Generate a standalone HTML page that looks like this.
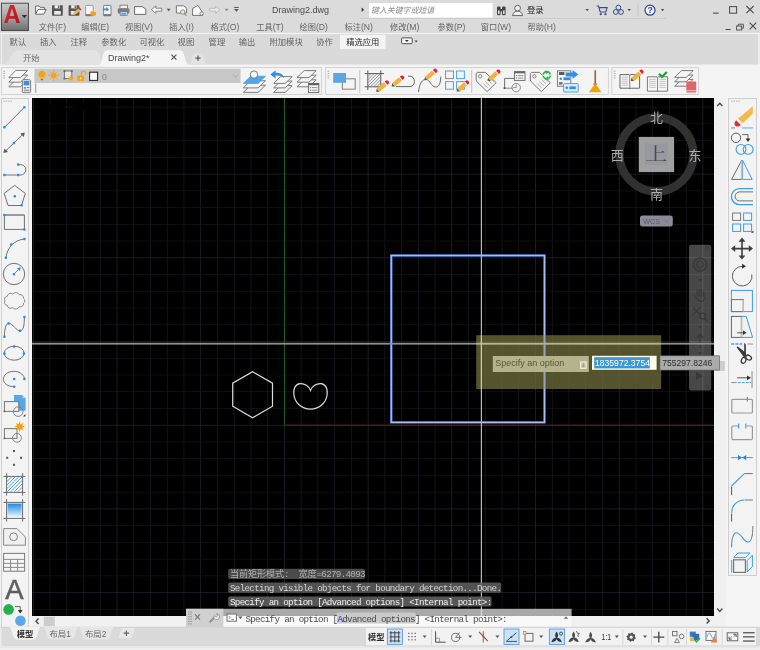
<!DOCTYPE html>
<html lang="zh-CN"><head><meta charset="utf-8"><title>Drawing2.dwg</title>
<style>
html,body{margin:0;padding:0;background:#f0f0f0;overflow:hidden}
body{width:760px;height:650px;position:relative}
svg{position:absolute;left:-10px;top:-10px;display:block;filter:blur(0.4px)}
text{font-family:"Liberation Sans", "Noto Sans CJK SC", sans-serif;white-space:pre}
text.m{font-family:"Liberation Mono", "Noto Sans CJK SC", monospace}
</style></head><body>
<svg width="780" height="670" viewBox="-10 -10 780 670">
<rect x="-10" y="-10" width="780" height="670" fill="#f4f4f4" />
<rect x="-10" y="-10" width="780" height="43.5" fill="#dbdbdb" />
<rect x="-10" y="33.5" width="780" height="31.5" fill="#dadada" />
<rect x="-10" y="32.9" width="780" height="1.2" fill="#f4f4f4" />
<rect x="-10" y="65" width="780" height="33" fill="#f4f4f4" />
<clipPath id="cv"><rect x="32" y="98" width="682" height="518"/></clipPath>
<rect x="32" y="98" width="682" height="518" fill="#000" />
<g clip-path="url(#cv)">
<rect x="32.95" y="98" width="0.7" height="518" fill="#262731" />
<rect x="49.69" y="98" width="0.7" height="518" fill="#1a1b23" />
<rect x="66.43" y="98" width="0.7" height="518" fill="#1a1b23" />
<rect x="83.17" y="98" width="0.7" height="518" fill="#1a1b23" />
<rect x="99.91" y="98" width="0.7" height="518" fill="#1a1b23" />
<rect x="116.65" y="98" width="0.7" height="518" fill="#262731" />
<rect x="133.39" y="98" width="0.7" height="518" fill="#1a1b23" />
<rect x="150.13" y="98" width="0.7" height="518" fill="#1a1b23" />
<rect x="166.87" y="98" width="0.7" height="518" fill="#1a1b23" />
<rect x="183.61" y="98" width="0.7" height="518" fill="#1a1b23" />
<rect x="200.35" y="98" width="0.7" height="518" fill="#262731" />
<rect x="217.09" y="98" width="0.7" height="518" fill="#1a1b23" />
<rect x="233.83" y="98" width="0.7" height="518" fill="#1a1b23" />
<rect x="250.57" y="98" width="0.7" height="518" fill="#1a1b23" />
<rect x="267.31" y="98" width="0.7" height="518" fill="#1a1b23" />
<rect x="284.05" y="98" width="0.7" height="518" fill="#262731" />
<rect x="300.79" y="98" width="0.7" height="518" fill="#1a1b23" />
<rect x="317.53" y="98" width="0.7" height="518" fill="#1a1b23" />
<rect x="334.27" y="98" width="0.7" height="518" fill="#1a1b23" />
<rect x="351.01" y="98" width="0.7" height="518" fill="#1a1b23" />
<rect x="367.75" y="98" width="0.7" height="518" fill="#262731" />
<rect x="384.49" y="98" width="0.7" height="518" fill="#1a1b23" />
<rect x="401.23" y="98" width="0.7" height="518" fill="#1a1b23" />
<rect x="417.97" y="98" width="0.7" height="518" fill="#1a1b23" />
<rect x="434.71" y="98" width="0.7" height="518" fill="#1a1b23" />
<rect x="451.45" y="98" width="0.7" height="518" fill="#262731" />
<rect x="468.19" y="98" width="0.7" height="518" fill="#1a1b23" />
<rect x="484.93" y="98" width="0.7" height="518" fill="#1a1b23" />
<rect x="501.67" y="98" width="0.7" height="518" fill="#1a1b23" />
<rect x="518.41" y="98" width="0.7" height="518" fill="#1a1b23" />
<rect x="535.15" y="98" width="0.7" height="518" fill="#262731" />
<rect x="551.89" y="98" width="0.7" height="518" fill="#1a1b23" />
<rect x="568.63" y="98" width="0.7" height="518" fill="#1a1b23" />
<rect x="585.37" y="98" width="0.7" height="518" fill="#1a1b23" />
<rect x="602.11" y="98" width="0.7" height="518" fill="#1a1b23" />
<rect x="618.85" y="98" width="0.7" height="518" fill="#262731" />
<rect x="635.59" y="98" width="0.7" height="518" fill="#1a1b23" />
<rect x="652.33" y="98" width="0.7" height="518" fill="#1a1b23" />
<rect x="669.07" y="98" width="0.7" height="518" fill="#1a1b23" />
<rect x="685.81" y="98" width="0.7" height="518" fill="#1a1b23" />
<rect x="702.55" y="98" width="0.7" height="518" fill="#262731" />
<rect x="32" y="106.79" width="682" height="0.7" fill="#14151a" />
<rect x="32" y="123.53" width="682" height="0.7" fill="#14151a" />
<rect x="32" y="140.27" width="682" height="0.7" fill="#14151a" />
<rect x="32" y="157.01" width="682" height="0.7" fill="#14151a" />
<rect x="32" y="173.75" width="682" height="0.7" fill="#25262f" />
<rect x="32" y="190.49" width="682" height="0.7" fill="#14151a" />
<rect x="32" y="207.23" width="682" height="0.7" fill="#14151a" />
<rect x="32" y="223.97" width="682" height="0.7" fill="#14151a" />
<rect x="32" y="240.71" width="682" height="0.7" fill="#14151a" />
<rect x="32" y="257.45" width="682" height="0.7" fill="#25262f" />
<rect x="32" y="274.19" width="682" height="0.7" fill="#14151a" />
<rect x="32" y="290.93" width="682" height="0.7" fill="#14151a" />
<rect x="32" y="307.67" width="682" height="0.7" fill="#14151a" />
<rect x="32" y="324.41" width="682" height="0.7" fill="#14151a" />
<rect x="32" y="341.15" width="682" height="0.7" fill="#25262f" />
<rect x="32" y="357.89" width="682" height="0.7" fill="#14151a" />
<rect x="32" y="374.63" width="682" height="0.7" fill="#14151a" />
<rect x="32" y="391.37" width="682" height="0.7" fill="#14151a" />
<rect x="32" y="408.11" width="682" height="0.7" fill="#14151a" />
<rect x="32" y="424.85" width="682" height="0.7" fill="#25262f" />
<rect x="32" y="441.59" width="682" height="0.7" fill="#14151a" />
<rect x="32" y="458.33" width="682" height="0.7" fill="#14151a" />
<rect x="32" y="475.07" width="682" height="0.7" fill="#14151a" />
<rect x="32" y="491.81" width="682" height="0.7" fill="#14151a" />
<rect x="32" y="508.55" width="682" height="0.7" fill="#25262f" />
<rect x="32" y="525.29" width="682" height="0.7" fill="#14151a" />
<rect x="32" y="542.03" width="682" height="0.7" fill="#14151a" />
<rect x="32" y="558.77" width="682" height="0.7" fill="#14151a" />
<rect x="32" y="575.51" width="682" height="0.7" fill="#14151a" />
<rect x="32" y="592.25" width="682" height="0.7" fill="#25262f" />
<rect x="32" y="608.99" width="682" height="0.7" fill="#14151a" />
<text x="34.6" y="110.4" font-size="8.2" fill="#000000"  stroke="#000" stroke-width="0.5">[-][俯视][二维线框]</text>
<rect x="283.9" y="98" width="1" height="327.2" fill="#265e22" />
<rect x="284.4" y="424.7" width="429.6" height="1" fill="#6a2020" />
<polygon points="252.6,371.7 272.5,383.2 272.5,406.2 252.6,417.7 232.7,406.2 232.7,383.2" fill="none" stroke="#dcdcdc" stroke-width="1.2"/>
<path d="M310.5 390.4 C309 386 304.5 383.2 300 383.6 C295.5 384 293.3 388.5 293.8 394 C294.4 402 301 409 310.5 409.2 C320 409 326.6 402 327.2 394 C327.7 388.5 325.5 384 321 383.6 C316.5 383.2 312 386 310.5 390.4 Z" stroke="#dcdcdc" fill="none" stroke-width="1.2" />
<rect x="391.3" y="255.5" width="153.2" height="166.9" fill="none" stroke="#4a6fc4" stroke-width="2.5"/>
<rect x="391.3" y="255.5" width="153.2" height="166.9" fill="none" stroke="#a3c0f8" stroke-width="1.25"/>
<circle cx="656.4" cy="154.4" r="37" fill="none" stroke="#313131" stroke-width="8.4" />
<rect x="638.8" y="136.9" width="35.3" height="35.2" fill="#a0a0a0" />
<rect x="645.2" y="143.4" width="22.1" height="21.7" fill="#9798a0" />
<g transform="translate(656.2 159.6) scale(1.28 1)">
<text x="0" y="0" font-size="17.5" fill="#4a4a4a"  text-anchor="middle" style="font-family:&quot;Liberation Serif&quot;,&quot;Noto Serif CJK SC&quot;,serif">上</text>
</g>
<text x="656.4" y="121.7" font-size="13" fill="#adadad"  text-anchor="middle">北</text>
<text x="656.4" y="199.3" font-size="13" fill="#adadad"  text-anchor="middle">南</text>
<text x="617.3" y="160.3" font-size="13" fill="#adadad"  text-anchor="middle">西</text>
<text x="695.0" y="160.0" font-size="13" fill="#adadad"  text-anchor="middle">东</text>
<rect x="640" y="215.4" width="32.8" height="11.2" rx="2.5" fill="#8b8b99"/>
<text x="643.2" y="224.1" font-size="7.2" fill="#5b5b66"  >WCS</text>
<path d="M664.3 219.6 l2.2 2.6 l2.2 -2.6" stroke="#74748a" fill="none" stroke-width="0.9" />
<rect x="689" y="244.8" width="22.2" height="145.8" rx="2.5" fill="#ffffff" fill-opacity="0.28"/>
<circle cx="707" cy="248.5" r="1.6" fill="none" stroke="#383838" stroke-width="0.8" />
<circle cx="707" cy="386.5" r="1.6" fill="none" stroke="#383838" stroke-width="0.8" />
<circle cx="700" cy="264.6" r="6.6" fill="none" stroke="#383838" stroke-width="1.5" />
<circle cx="700" cy="264.6" r="3.2" fill="none" stroke="#383838" stroke-width="1.3" />
<path d="M698 279 h4 l-2 2.4z" stroke="none" fill="#383838" stroke-width="1" />
<path d="M697.2 296 v-5.2 M699.4 296 v-6.6 M701.6 296 v-6.4 M703.8 296.4 v-4.6" stroke="#383838" fill="none" stroke-width="1.3" stroke-linecap="round"/>
<path d="M694 295.4 l2.6 3.2 c1 2 2.4 2.8 4.4 2.8 c2.4 0 3.8 -1.6 3.8 -4.6" stroke="#383838" fill="none" stroke-width="1.2" stroke-linecap="round"/>
<path d="M692.5 307 l8 8 M700.5 307 l-8 8" stroke="#383838" fill="none" stroke-width="1.2" />
<circle cx="702.5" cy="316" r="3" fill="none" stroke="#383838" stroke-width="1.2" />
<path d="M704.5 318.2 l3 3" stroke="#383838" fill="none" stroke-width="1.6" />
<path d="M698 326 h4 l-2 2.4z" stroke="none" fill="#383838" stroke-width="1" />
<path d="M700 334 v14 M696.5 338 l3.5 -4 l3.5 4" stroke="#383838" fill="none" stroke-width="1.2" />
<path d="M692 346 c3 -4 13 -4 16 0" stroke="#383838" fill="none" stroke-width="1.2" />
<path d="M698 352 h4 l-2 2.4z" stroke="none" fill="#383838" stroke-width="1" />
<path d="M696 372 v8 l7 -4z" stroke="none" fill="#383838" stroke-width="1" />
<rect x="32" y="342.8" width="682" height="1.8" fill="#919191" />
<rect x="480.8" y="98" width="1.2" height="518" fill="#b8b8b8" />
</g>
<rect x="476.2" y="335.2" width="185" height="53.8" fill="#706f3e" fill-opacity="0.75"/>
<rect x="476.2" y="342.8" width="185" height="1.8" fill="#c4c498" fill-opacity="0.8"/>
<rect x="480.8" y="335.2" width="1.2" height="53.8" fill="#dadaac" fill-opacity="0.85"/>
<rect x="543.6" y="335.2" width="1.8" height="53.8" fill="#9fb4dc" fill-opacity="0.7"/>
<rect x="492.8" y="356" width="96" height="16" fill="#b4b38c" />
<text x="495.2" y="365.6" font-size="9" fill="#57553a"  >Specify an option</text>
<rect x="580" y="361.4" width="6.8" height="7.6" fill="#cfcfae" />
<rect x="580.5" y="361.9" width="5.8" height="6.6" fill="none" stroke="#f0f0d8" stroke-width="0.8"/>
<path d="M583.4 363.2 v3.4 M581.9 365.3 l1.5 1.6 l1.5 -1.6" stroke="#8a8a6a" fill="none" stroke-width="0.7" />
<rect x="592" y="355.8" width="64.6" height="14" fill="#ffffe6" />
<rect x="594.2" y="357.2" width="55.6" height="11.2" fill="#3c97d3" />
<text x="595" y="366.2" font-size="8.6" fill="#ffffff"  >1835972.3754</text>
<rect x="714" y="98" width="12" height="518" fill="#f0f0f0" />
<rect x="714.8" y="361" width="10" height="10" fill="#cdcdcd" />
<path d="M717.2 106.0 l2.6 -2.8 l2.6 2.8" stroke="#4a4a4a" fill="none" stroke-width="1.4" />
<path d="M717.2 608.6 l2.6 2.8 l2.6 -2.8" stroke="#4a4a4a" fill="none" stroke-width="1.4" />
<rect x="726" y="98" width="44" height="530" fill="#f5f5f5" />
<rect x="659.9" y="355.8" width="59.6" height="14.3" fill="#ababab" stroke="#555" stroke-width="0.6"/>
<text x="662.2" y="366.3" font-size="8.6" fill="#2b2b2b"  >755297.8246</text>
<rect x="228.2" y="568.8" width="136.6" height="10.2" fill="#5c5c5c" fill-opacity="0.8" rx="1.5"/>
<text x="230" y="577.0" font-size="9.2" fill="#b0b0b0" class="m" letter-spacing="-0.67"><tspan letter-spacing="-0.2">当前矩形模式</tspan>:  <tspan letter-spacing="-0.2">宽度</tspan>=6279.4093</text>
<rect x="228.2" y="582.6" width="272.9" height="10.2" fill="#666666" fill-opacity="0.8" rx="1.5"/>
<text x="230" y="590.8000000000001" font-size="9.2" fill="#d4d4d4" class="m" letter-spacing="-0.67">Selecting visible objects for boundary detection...Done.</text>
<rect x="228.2" y="596.4" width="263.3" height="10.2" fill="#6c6c6c" fill-opacity="0.8" rx="1.5"/>
<text x="230" y="604.6" font-size="9.2" fill="#f2f2f2" class="m" letter-spacing="-0.67">Specify an option [Advanced options] &lt;Internal point&gt;:</text>
<defs><linearGradient id="ab" x1="0" y1="0" x2="0" y2="1"><stop offset="0" stop-color="#c9c9c9"/><stop offset="0.45" stop-color="#a9a9a9"/><stop offset="1" stop-color="#6f6f6f"/></linearGradient><linearGradient id="ar" x1="0" y1="0" x2="1" y2="1"><stop offset="0" stop-color="#e0323c"/><stop offset="1" stop-color="#a3121c"/></linearGradient></defs>
<rect x="1.4" y="3.2" width="27" height="27.4" fill="url(#ab)" stroke="#3f3f3f" stroke-width="0.9"/>
<text x="3.6" y="22.8" font-size="25.6" fill="url(#ar)"  font-weight="bold" textLength="17" lengthAdjust="spacingAndGlyphs">A</text>
<path d="M21.7 15 h5.4 l-2.7 3.3z" stroke="none" fill="#30323a" stroke-width="1" />
<path d="M35.6 14 v-8 h3.6 l1 1.3 h4.2 v2.2" stroke="#6a6a6a" fill="#fafafa" stroke-width="1" />
<path d="M35.6 14.2 l2.4 -4.8 h8.2 l-2.4 4.8z" stroke="#6a6a6a" fill="#fafafa" stroke-width="1" />
<rect x="52" y="5.2" width="10.8" height="10.6" fill="#555555" rx="0.8"/>
<rect x="54.6" y="5.2" width="5.4" height="3.2" fill="#f0f0f0" />
<rect x="58" y="5.6" width="1.3" height="2.4" fill="#555555" />
<rect x="54.2" y="11" width="6.6" height="3.6" fill="#ececec" />
<rect x="68.6" y="5.2" width="10.8" height="10.6" fill="#555555" rx="0.8"/>
<rect x="71.2" y="5.2" width="5.4" height="3.2" fill="#f0f0f0" />
<rect x="74.6" y="5.6" width="1.3" height="2.4" fill="#555555" />
<rect x="70.8" y="11" width="4" height="3.6" fill="#ececec" />
<path d="M73 15 l1 -3 l4.4 -3.6 l2 2.2 l-4.4 3.6z" stroke="none" fill="#f0b84a" stroke-width="1" />
<path d="M78.4 8.4 l1.2 -1 l2 2.2 l-1.2 1z" stroke="none" fill="#e8242c" stroke-width="1" />
<rect x="85.6" y="5.4" width="7.6" height="10.4" fill="#f7f7f7" stroke="#8a8a8a" stroke-width="0.8" rx="0.8"/>
<rect x="85.6" y="14.2" width="7.6" height="1.6" fill="#6a6a6a" />
<path d="M90.4 15.6 v-4.4 h2.2 l0.6 0.8 h2.8 v3.6z" stroke="none" fill="#f0a020" stroke-width="1" />
<rect x="103.6" y="5.4" width="7.4" height="10.4" fill="#f7f7f7" stroke="#6a6a6a" stroke-width="0.8" rx="0.8"/>
<rect x="103.6" y="14.2" width="7.4" height="1.6" fill="#6a6a6a" />
<path d="M103 8.6 h3.4 v-1.6 l2.6 2.4 l-2.6 2.4 v-1.6 h-3.4z" stroke="none" fill="#2b8fe6" stroke-width="1" />
<rect x="120" y="5.2" width="7.4" height="3.6" fill="#f4f4f4" stroke="#707070" stroke-width="0.8"/>
<rect x="117.8" y="8.4" width="11.6" height="5.2" fill="#7b7b7b" rx="0.8"/>
<rect x="120.2" y="11.6" width="7" height="4" fill="#f0f0f0" stroke="#707070" stroke-width="0.7"/>
<rect x="121.2" y="12.6" width="5" height="2.2" fill="#4da3e8" />
<path d="M134.6 6.6 h7.6 l3.6 2.6 v5.2 h-11.2z" stroke="#6a6a6a" fill="#fafafa" stroke-width="1" />
<path d="M151.4 9.6 l4.4 -3.6 v2.2 h6 v3 h-6 v2.2z" stroke="#7a7a7a" fill="#fafafa" stroke-width="0.9" />
<path d="M166.6 8.8 h4 l-2 2.4z" stroke="none" fill="#555" stroke-width="1" />
<path d="M176.4 5.8 h7.4 l2.8 2.4 v4.8 h-10.2z" stroke="#6a6a6a" fill="#fafafa" stroke-width="0.9" />
<circle cx="182.8" cy="12" r="2.2" fill="#eaeaea" stroke="#777" stroke-width="0.8" />
<path d="M184.4 13.6 l2 2" stroke="#a08050" fill="none" stroke-width="1.2" />
<path d="M192.6 15.4 v-7 l5.4 -3 l4.6 7.4 v2.6z" stroke="#6a6a6a" fill="#fafafa" stroke-width="0.9" />
<circle cx="201.6" cy="13.6" r="1.7" fill="#f0f0f0" stroke="#6a6a6a" stroke-width="0.8" />
<path d="M220 9.6 l-4.4 -3.6 v2.2 h-6 v3 h6 v2.2z" stroke="#b9b9b9" fill="#e6e6e6" stroke-width="0.9" />
<path d="M224.6 8.8 h4 l-2 2.4z" stroke="none" fill="#8a8a8a" stroke-width="1" />
<rect x="234.2" y="7" width="4.4" height="1" fill="#555" />
<path d="M234 9 h4.8 l-2.4 2.8z" stroke="none" fill="#555" stroke-width="1" />
<text x="272" y="13.1" font-size="9" fill="#4a4a4a"  >Drawing2.dwg</text>
<path d="M361.6 7.6 v4.4 l2.6 -2.2z" stroke="none" fill="#3a3a3a" stroke-width="1" />
<rect x="369" y="3" width="123.6" height="14.6" fill="#ffffff" />
<text x="371" y="13.2" font-size="7.9" fill="#8a8a8a"  font-style="italic">键入关键字或短语</text>
<rect x="497" y="6.6" width="3.6" height="8.6" fill="#444" rx="1.2"/>
<rect x="502" y="6.6" width="3.6" height="8.6" fill="#444" rx="1.2"/>
<rect x="500" y="9" width="2.6" height="2.4" fill="#444" />
<rect x="498" y="10.4" width="1.6" height="3.6" fill="#e0e0e0" />
<rect x="503" y="10.4" width="1.6" height="3.6" fill="#e0e0e0" />
<circle cx="517.6" cy="8.2" r="2.9" fill="#f0f0f0" stroke="#555" stroke-width="0.9" />
<path d="M512.6 15.6 c0.6 -3.4 2.6 -4.4 5 -4.4 c2.4 0 4.4 1 5 4.4z" stroke="#555" fill="#f0f0f0" stroke-width="0.9" />
<text x="527" y="13.3" font-size="8.4" fill="#222"  >登录</text>
<path d="M585.4 9 h3.6 l-1.8 2.2z" stroke="none" fill="#555" stroke-width="1" />
<path d="M596.6 6 h2 l1.6 6 h5.6 l1.4 -4.4 h-8" stroke="#3a4a8c" fill="none" stroke-width="1.1" />
<circle cx="600.8" cy="14.2" r="1.1" fill="#3a4a8c" stroke="none" stroke-width="1" />
<circle cx="605.4" cy="14.2" r="1.1" fill="#3a4a8c" stroke="none" stroke-width="1" />
<circle cx="618.4" cy="7.6" r="2.4" fill="none" stroke="#3a4a8c" stroke-width="1" />
<circle cx="615.8" cy="12" r="2.4" fill="none" stroke="#3a4a8c" stroke-width="1" />
<circle cx="621" cy="12" r="2.4" fill="none" stroke="#3a4a8c" stroke-width="1" />
<path d="M627.4 9 h3.6 l-1.8 2.2z" stroke="none" fill="#555" stroke-width="1" />
<rect x="637.6" y="3.6" width="0.8" height="13" fill="#c4c4c4" />
<circle cx="650" cy="10.2" r="5" fill="#f4f6ff" stroke="#2a3f9a" stroke-width="1.2" />
<text x="650" y="13.3" font-size="8.6" fill="#2a3f9a"  text-anchor="middle" font-weight="bold">?</text>
<path d="M660.8 9 h3.6 l-1.8 2.2z" stroke="none" fill="#555" stroke-width="1" />
<rect x="360" y="18" width="306" height="0.8" fill="#c8c8c8" />
<rect x="713" y="12.6" width="5.6" height="1.1" fill="#4a4a4a" />
<rect x="729.6" y="6.6" width="7" height="6.6" fill="none" stroke="#4a4a4a" stroke-width="1"/>
<path d="M746.4 6 l7.2 7.2 M753.6 6 l-7.2 7.2" stroke="#4a4a4a" fill="none" stroke-width="1.1" />
<rect x="725.6" y="29" width="5" height="1" fill="#4a4a4a" />
<rect x="736.6" y="26" width="5" height="4" fill="none" stroke="#4a4a4a" stroke-width="0.9"/>
<path d="M738.4 26 v-1.8 h5 v4 h-1.8" stroke="#4a4a4a" fill="none" stroke-width="0.9" />
<path d="M749.6 22.6 l6.6 6.8 M756.2 22.6 l-6.6 6.8" stroke="#4a4a4a" fill="none" stroke-width="1.1" />
<text x="38.8" y="30.0" font-size="8.2" fill="#666666"  >文件<tspan font-size="8.6">(F)</tspan></text>
<text x="81.3" y="30.0" font-size="8.2" fill="#666666"  >编辑<tspan font-size="8.6">(E)</tspan></text>
<text x="125" y="30.0" font-size="8.2" fill="#666666"  >视图<tspan font-size="8.6">(V)</tspan></text>
<text x="169.3" y="30.0" font-size="8.2" fill="#666666"  >插入<tspan font-size="8.6">(I)</tspan></text>
<text x="210.5" y="30.0" font-size="8.2" fill="#666666"  >格式<tspan font-size="8.6">(O)</tspan></text>
<text x="256.3" y="30.0" font-size="8.2" fill="#666666"  >工具<tspan font-size="8.6">(T)</tspan></text>
<text x="299.5" y="30.0" font-size="8.2" fill="#666666"  >绘图<tspan font-size="8.6">(D)</tspan></text>
<text x="344.5" y="30.0" font-size="8.2" fill="#666666"  >标注<tspan font-size="8.6">(N)</tspan></text>
<text x="390" y="30.0" font-size="8.2" fill="#666666"  >修改<tspan font-size="8.6">(M)</tspan></text>
<text x="437.5" y="30.0" font-size="8.2" fill="#666666"  >参数<tspan font-size="8.6">(P)</tspan></text>
<text x="480.8" y="30.0" font-size="8.2" fill="#666666"  >窗口<tspan font-size="8.6">(W)</tspan></text>
<text x="527.5" y="30.0" font-size="8.2" fill="#666666"  >帮助<tspan font-size="8.6">(H)</tspan></text>
<rect x="340" y="35" width="45.6" height="14" fill="#f4f4f4" />
<text x="9.6" y="45.2" font-size="8.3" fill="#636363"  >默认</text>
<text x="40" y="45.2" font-size="8.3" fill="#636363"  >插入</text>
<text x="70.5" y="45.2" font-size="8.3" fill="#636363"  >注释</text>
<text x="101.3" y="45.2" font-size="8.3" fill="#636363"  >参数化</text>
<text x="139.5" y="45.2" font-size="8.3" fill="#636363"  >可视化</text>
<text x="177.6" y="45.2" font-size="8.3" fill="#636363"  >视图</text>
<text x="208.6" y="45.2" font-size="8.3" fill="#636363"  >管理</text>
<text x="238.8" y="45.2" font-size="8.3" fill="#636363"  >输出</text>
<text x="269.5" y="45.2" font-size="8.3" fill="#636363"  >附加模块</text>
<text x="316.2" y="45.2" font-size="8.3" fill="#636363"  >协作</text>
<text x="346.2" y="45.2" font-size="8.3" fill="#2a2a2a"  >精选应用</text>
<rect x="401.6" y="37.9" width="10.6" height="5.8" fill="#f4f4f4" stroke="#444" stroke-width="0.9" rx="1"/>
<path d="M405 39.9 h3.8 l-1.9 2z" stroke="none" fill="#333" stroke-width="1" />
<path d="M414.6 40.6 h3 l-1.5 1.8z" stroke="none" fill="#444" stroke-width="1" />
<rect x="1" y="34" width="1" height="31" fill="#eeeeee" />
<rect x="758" y="34" width="12" height="31" fill="#ececec" />
<rect x="-10" y="64.6" width="780" height="1" fill="#f4f4f4" />
<path d="M3 65.2 C10 65.2 10.5 50.2 18 50.2 H95 C100.5 50.2 100 65.2 104.5 65.2 Z" stroke="none" fill="#e3e3e3" stroke-width="1" />
<path d="M98.6 65.2 C102.6 65.2 101.6 50.2 107 50.2 H180 C185.6 50.2 184.8 65.2 189.6 65.2 Z" stroke="none" fill="#f5f5f5" stroke-width="1" />
<text x="23" y="60.5" font-size="8.4" fill="#6e6e6e"  >开始</text>
<text x="108" y="60.6" font-size="9" fill="#4a4a4a"  >Drawing2*</text>
<path d="M171.4 54.6 l5 5 M176.4 54.6 l-5 5" stroke="#555" fill="none" stroke-width="1.2" />
<path d="M189.6 64.6 c2.4 -2 1.6 -11 5 -11 h7.4 c3 0 2.4 8.6 3.6 11z" stroke="none" fill="#e2e2e2" stroke-width="1" />
<path d="M195.4 58.2 h5.2 M198 55.6 v5.2" stroke="#606060" fill="none" stroke-width="1.3" />
<rect x="1.4" y="67.6" width="320.20000000000005" height="26.9" fill="#f4f4f4" stroke="#cfcfcf" stroke-width="0.9"/>
<rect x="3.4" y="70.6" width="1.6" height="1.2" fill="#b4b4b4" />
<rect x="3.4" y="72.89999999999999" width="1.6" height="1.2" fill="#b4b4b4" />
<rect x="3.4" y="75.19999999999999" width="1.6" height="1.2" fill="#b4b4b4" />
<rect x="3.4" y="77.5" width="1.6" height="1.2" fill="#b4b4b4" />
<path d="M8.8 86.80000000000001 l7.0 -7.2 h11.8 l-7.0 7.2z" stroke="#6e6e6e" fill="#f4f4f4" stroke-width="0.9" />
<path d="M8.8 82.2 l7.0 -7.2 h11.8 l-7.0 7.2z" stroke="#6e6e6e" fill="#f4f4f4" stroke-width="0.9" />
<path d="M8.8 77.60000000000001 l7.0 -7.2 h11.8 l-7.0 7.2z" stroke="#6e6e6e" fill="#f6f6f6" stroke-width="0.9" />
<rect x="22.4" y="79.8" width="8.2" height="12.8" fill="#f4f4f4" stroke="#707070" stroke-width="0.9" rx="0.8"/>
<rect x="23.6" y="81" width="5.8" height="4.4" fill="#2f8fe8" />
<rect x="23.8" y="87.2" width="2.2" height="1.4" fill="#777" />
<rect x="26.8" y="87.2" width="2.6" height="0.9" fill="#777" />
<rect x="23.8" y="89.6" width="5.6" height="1.6" fill="#9a9a9a" />
<rect x="34.4" y="68.8" width="206.2" height="14.2" fill="#c7c7c7" />
<rect x="35.3" y="83.4" width="0.9" height="9.4" fill="#8a8a8a" />
<circle cx="41.9" cy="74.2" r="3.5" fill="#f7a410" stroke="none" stroke-width="1" />
<rect x="40.4" y="77.4" width="3" height="1.6" fill="#f3b64a" />
<rect x="40.8" y="79" width="2.2" height="1.2" fill="#707070" />
<circle cx="53.7" cy="75.4" r="2.9" fill="#f7a410" stroke="none" stroke-width="1" />
<line x1="57.3" y1="75.4" x2="59.3" y2="75.4" stroke="#f7a410" stroke-width="0.9" />
<line x1="56.25" y1="77.95" x2="57.66" y2="79.36" stroke="#f7a410" stroke-width="0.9" />
<line x1="53.7" y1="79.0" x2="53.7" y2="81.0" stroke="#f7a410" stroke-width="0.9" />
<line x1="51.15" y1="77.95" x2="49.74" y2="79.36" stroke="#f7a410" stroke-width="0.9" />
<line x1="50.1" y1="75.4" x2="48.1" y2="75.4" stroke="#f7a410" stroke-width="0.9" />
<line x1="51.15" y1="72.85" x2="49.74" y2="71.44" stroke="#f7a410" stroke-width="0.9" />
<line x1="53.7" y1="71.8" x2="53.7" y2="69.8" stroke="#f7a410" stroke-width="0.9" />
<line x1="56.25" y1="72.85" x2="57.66" y2="71.44" stroke="#f7a410" stroke-width="0.9" />
<rect x="64.4" y="71" width="7.4" height="7.6" fill="#e9e9e9" stroke="#6b6b6b" stroke-width="0.9"/>
<rect x="63.50000000000001" y="70.1" width="1.8" height="1.8" fill="#6b6b6b" />
<rect x="70.89999999999999" y="70.1" width="1.8" height="1.8" fill="#6b6b6b" />
<rect x="63.50000000000001" y="77.69999999999999" width="1.8" height="1.8" fill="#6b6b6b" />
<circle cx="70.8" cy="78.4" r="1.9" fill="#f7a410" stroke="none" stroke-width="1" />
<line x1="73.2" y1="78.4" x2="74.4" y2="78.4" stroke="#f7a410" stroke-width="0.7" />
<line x1="72.5" y1="80.1" x2="73.35" y2="80.95" stroke="#f7a410" stroke-width="0.7" />
<line x1="70.8" y1="80.8" x2="70.8" y2="82.0" stroke="#f7a410" stroke-width="0.7" />
<line x1="69.1" y1="80.1" x2="68.25" y2="80.95" stroke="#f7a410" stroke-width="0.7" />
<line x1="68.4" y1="78.4" x2="67.2" y2="78.4" stroke="#f7a410" stroke-width="0.7" />
<line x1="69.1" y1="76.7" x2="68.25" y2="75.85" stroke="#f7a410" stroke-width="0.7" />
<line x1="70.8" y1="76.0" x2="70.8" y2="74.8" stroke="#f7a410" stroke-width="0.7" />
<line x1="72.5" y1="76.7" x2="73.35" y2="75.85" stroke="#f7a410" stroke-width="0.7" />
<rect x="77.2" y="75.6" width="7" height="5.4" fill="#f7a410" rx="0.6"/>
<path d="M81.4 75.6 v-2.2 a2.2 2.2 0 0 1 4.4 0 v1" stroke="#f7a410" fill="none" stroke-width="1.3" />
<rect x="80.2" y="77.4" width="1" height="1.8" fill="#fff3d6" />
<rect x="89.6" y="72.2" width="8" height="8.2" fill="#ffffff" stroke="#2a2a2a" stroke-width="1.1"/>
<text x="101.9" y="79.6" font-size="8.6" fill="#7b8794"  >0</text>
<path d="M233.2 74.8 l2.4 2.4 l2.4 -2.4" stroke="#a9a9a9" fill="none" stroke-width="1" />
<path d="M243.3 92.4 l7.4 -7.2 h14.8 l-7.4 7.2z" stroke="#6e6e6e" fill="#f4f4f4" stroke-width="0.9" />
<path d="M243.3 87.9 l7.4 -7.2 h14.8 l-7.4 7.2z" stroke="#6e6e6e" fill="#f4f4f4" stroke-width="0.9" />
<path d="M243.3 83.4 l7.4 -7.2 h14.8 l-7.4 7.2z" stroke="#55a5e6" fill="#55a5e6" stroke-width="0.9" />
<circle cx="254" cy="74.6" r="3.7" fill="#f6f6f6" stroke="#6e6e6e" stroke-width="0.9" />
<path d="M273.6 92.39999999999999 l7.0 -6.8 h11.6 l-7.0 6.8z" stroke="#6e6e6e" fill="#f4f4f4" stroke-width="0.9" />
<path d="M273.6 87.89999999999999 l7.0 -6.8 h11.6 l-7.0 6.8z" stroke="#6e6e6e" fill="#f4f4f4" stroke-width="0.9" />
<path d="M273.6 83.39999999999999 l7.0 -6.8 h11.6 l-7.0 6.8z" stroke="#6e6e6e" fill="#f6f6f6" stroke-width="0.9" />
<path d="M270.4 74.4 l5.2 -4.2 v2.6 c4.6 0 8 1.6 8.4 5.4 c-1.6 -2.2 -4.4 -2.8 -8.4 -2.6 v2.8z" stroke="none" fill="#2f8ee6" stroke-width="1" />
<path d="M297 86.8 l7.2 -7 h12 l-7.2 7z" stroke="#6e6e6e" fill="#f4f4f4" stroke-width="0.9" />
<path d="M297 82.19999999999999 l7.2 -7 h12 l-7.2 7z" stroke="#6e6e6e" fill="#f4f4f4" stroke-width="0.9" />
<path d="M297 77.6 l7.2 -7 h12 l-7.2 7z" stroke="#6e6e6e" fill="#f6f6f6" stroke-width="0.9" />
<rect x="308.6" y="83.4" width="10.2" height="9.2" fill="#f4f4f4" stroke="#5e5e5e" stroke-width="0.9"/>
<rect x="308.6" y="83.4" width="10.2" height="1.8" fill="#5e5e5e" />
<rect x="310" y="87.2" width="1.2" height="1" fill="#666" />
<rect x="312" y="87.2" width="5.4" height="0.9" fill="#8a8a8a" />
<rect x="310" y="89.8" width="1.2" height="1" fill="#666" />
<rect x="312" y="89.8" width="5.4" height="0.9" fill="#8a8a8a" />
<rect x="325.6" y="67.6" width="282.79999999999995" height="26.9" fill="#f4f4f4" stroke="#cfcfcf" stroke-width="0.9"/>
<rect x="327.6" y="70.6" width="1.6" height="1.2" fill="#b4b4b4" />
<rect x="327.6" y="72.89999999999999" width="1.6" height="1.2" fill="#b4b4b4" />
<rect x="327.6" y="75.19999999999999" width="1.6" height="1.2" fill="#b4b4b4" />
<rect x="327.6" y="77.5" width="1.6" height="1.2" fill="#b4b4b4" />
<rect x="342.4" y="78.8" width="12.8" height="10.4" fill="#f4f4f4" stroke="#8a8a8a" stroke-width="1.1"/>
<rect x="333.2" y="73" width="12.8" height="9.8" fill="#5aa7e8" />
<rect x="359.3" y="70" width="1" height="23" fill="#c2c2c2" />
<clipPath id="hc"><rect x="368.2" y="74" width="12.2" height="12.4"/></clipPath>
<g clip-path="url(#hc)">
<rect x="368.2" y="74" width="12.2" height="12.4" fill="#f4f4f4" />
<line x1="356.4" y1="88" x2="370.4" y2="74" stroke="#7a7a7a" stroke-width="0.8" />
<line x1="359.6" y1="88" x2="373.6" y2="74" stroke="#7a7a7a" stroke-width="0.8" />
<line x1="362.8" y1="88" x2="376.8" y2="74" stroke="#7a7a7a" stroke-width="0.8" />
<line x1="366.0" y1="88" x2="380.0" y2="74" stroke="#7a7a7a" stroke-width="0.8" />
<line x1="369.2" y1="88" x2="383.2" y2="74" stroke="#7a7a7a" stroke-width="0.8" />
<line x1="372.4" y1="88" x2="386.4" y2="74" stroke="#7a7a7a" stroke-width="0.8" />
<line x1="375.6" y1="88" x2="389.6" y2="74" stroke="#7a7a7a" stroke-width="0.8" />
<line x1="378.8" y1="88" x2="392.8" y2="74" stroke="#7a7a7a" stroke-width="0.8" />
<line x1="382.0" y1="88" x2="396.0" y2="74" stroke="#7a7a7a" stroke-width="0.8" />
<line x1="385.2" y1="88" x2="399.2" y2="74" stroke="#7a7a7a" stroke-width="0.8" />
<line x1="388.4" y1="88" x2="402.4" y2="74" stroke="#7a7a7a" stroke-width="0.8" />
</g>
<path d="M364.6 73.6 h19.4 M364.6 86.8 h19.4 M367.8 70.4 v19.6 M380.8 70.4 v19.6" stroke="#5b5b5b" fill="none" stroke-width="1" />
<g transform="translate(376.2 91.8) rotate(-41)">
<path d="M0 0 l2.6 -2.2 v4.4z" stroke="none" fill="#5a5a5a" stroke-width="1" />
<rect x="2.6" y="-2.2" width="9.5" height="4.4" fill="#f3b23c" />
<rect x="12.1" y="-2.2" width="1.0" height="4.4" fill="#f4f4f4" />
<path d="M13.1 -2.2 h1 a2.2 2.2 0 0 1 0 4.4 h-1z" stroke="none" fill="#ee1c2e" stroke-width="1" />
</g>
<path d="M396 86.6 h14 c2.8 0 4.4 -2.4 4.4 -5.2 c0 -2.8 -1.6 -5.2 -4.4 -5.2 h-2" stroke="#666" fill="none" stroke-width="1" />
<g transform="translate(391.6 86.4) rotate(-40)">
<path d="M0 0 l2.6 -2.15 v4.3z" stroke="none" fill="#5a5a5a" stroke-width="1" />
<rect x="2.6" y="-2.15" width="9.0" height="4.3" fill="#f3b23c" />
<rect x="11.6" y="-2.15" width="1.0" height="4.3" fill="#f4f4f4" />
<path d="M12.6 -2.15 h1 a2.15 2.15 0 0 1 0 4.3 h-1z" stroke="none" fill="#ee1c2e" stroke-width="1" />
</g>
<path d="M418.6 92 c0.6 -9 4 -12.6 7.4 -12.6 c3.8 0 5.4 7.6 9.6 7.6 c3.6 0 5 -4 5.2 -10.4" stroke="#666" fill="none" stroke-width="1" />
<g transform="translate(424.4 80.2) rotate(-41)">
<path d="M0 0 l2.6 -2.15 v4.3z" stroke="none" fill="#5a5a5a" stroke-width="1" />
<rect x="2.6" y="-2.15" width="9.6" height="4.3" fill="#f3b23c" />
<rect x="12.2" y="-2.15" width="1.0" height="4.3" fill="#f4f4f4" />
<path d="M13.2 -2.15 h1 a2.15 2.15 0 0 1 0 4.3 h-1z" stroke="none" fill="#ee1c2e" stroke-width="1" />
</g>
<rect x="445.6" y="71" width="7.8" height="7.6" fill="#f4f4f4" stroke="#8a8a8a" stroke-width="1"/>
<rect x="456.6" y="71" width="7.8" height="7.6" fill="#f4f4f4" stroke="#4da3e8" stroke-width="1"/>
<rect x="445.6" y="81.6" width="7.8" height="7.6" fill="#f4f4f4" stroke="#4da3e8" stroke-width="1"/>
<rect x="456.6" y="81.6" width="7.8" height="7.6" fill="#f4f4f4" stroke="#4da3e8" stroke-width="1"/>
<g transform="translate(456.6 91.6) rotate(-41)">
<path d="M0 0 l2.6 -2.15 v4.3z" stroke="none" fill="#5a5a5a" stroke-width="1" />
<rect x="2.6" y="-2.15" width="9.2" height="4.3" fill="#f3b23c" />
<rect x="11.799999999999999" y="-2.15" width="1.0" height="4.3" fill="#f4f4f4" />
<path d="M12.799999999999999 -2.15 h1 a2.15 2.15 0 0 1 0 4.3 h-1z" stroke="none" fill="#ee1c2e" stroke-width="1" />
</g>
<rect x="471.2" y="70" width="1" height="23" fill="#c2c2c2" />
<g transform="translate(476.2 72.4) scale(0.99)">
<path d="M0 1 l1 -1 h8.2 l11 10.4 l-9.2 9 l-11 -10.8z" stroke="#777" fill="#f4f4f4" stroke-width="1" />
<circle cx="4" cy="4" r="1.7" fill="#f4f4f4" stroke="#777" stroke-width="0.9" />
<line x1="7.0" y1="11.2" x2="11.4" y2="15.6" stroke="#9a9a9a" stroke-width="0.8" />
<line x1="9.1" y1="9.1" x2="13.5" y2="13.5" stroke="#9a9a9a" stroke-width="0.8" />
<line x1="11.2" y1="6.999999999999999" x2="15.600000000000001" y2="11.399999999999999" stroke="#9a9a9a" stroke-width="0.8" />
<line x1="13.3" y1="4.899999999999999" x2="17.700000000000003" y2="9.299999999999999" stroke="#9a9a9a" stroke-width="0.8" />
</g>
<g transform="translate(487.6 81) rotate(-41)">
<path d="M0 0 l2.6 -2.15 v4.3z" stroke="none" fill="#5a5a5a" stroke-width="1" />
<rect x="2.6" y="-2.15" width="9.6" height="4.3" fill="#f3b23c" />
<rect x="12.2" y="-2.15" width="1.0" height="4.3" fill="#f4f4f4" />
<path d="M13.2 -2.15 h1 a2.15 2.15 0 0 1 0 4.3 h-1z" stroke="none" fill="#ee1c2e" stroke-width="1" />
</g>
<path d="M504.6 88.2 v-9.8 h10.4" stroke="#707070" fill="none" stroke-width="1" />
<path d="M504.6 88.2 h9" stroke="#8a8a8a" fill="none" stroke-width="1" />
<rect x="503.6" y="87.2" width="1.8" height="1.8" fill="#555" />
<circle cx="516.2" cy="87.6" r="4.2" fill="#f4f4f4" stroke="#7a7a7a" stroke-width="0.9" />
<path d="M516.2 84.4 v3.2 h-3" stroke="#7a7a7a" fill="none" stroke-width="0.8" />
<rect x="514.4" y="71.6" width="10.6" height="8.8" fill="#f4f4f4" stroke="#666" stroke-width="0.9"/>
<rect x="514.4" y="71.6" width="10.6" height="1.7" fill="#666" />
<rect x="515.8" y="75.2" width="1.2" height="0.9" fill="#666" />
<rect x="517.8" y="75.2" width="5.4" height="0.9" fill="#8a8a8a" />
<rect x="515.8" y="77.6" width="1.2" height="0.9" fill="#666" />
<rect x="517.8" y="77.6" width="5.4" height="0.9" fill="#8a8a8a" />
<g transform="translate(530.4 72.4) scale(0.99)">
<path d="M0 1 l1 -1 h8.2 l11 10.4 l-9.2 9 l-11 -10.8z" stroke="#777" fill="#f4f4f4" stroke-width="1" />
<circle cx="4" cy="4" r="1.7" fill="#f4f4f4" stroke="#777" stroke-width="0.9" />
<line x1="7.0" y1="11.2" x2="11.4" y2="15.6" stroke="#9a9a9a" stroke-width="0.8" />
<line x1="9.1" y1="9.1" x2="13.5" y2="13.5" stroke="#9a9a9a" stroke-width="0.8" />
<line x1="11.2" y1="6.999999999999999" x2="15.600000000000001" y2="11.399999999999999" stroke="#9a9a9a" stroke-width="0.8" />
<line x1="13.3" y1="4.899999999999999" x2="17.700000000000003" y2="9.299999999999999" stroke="#9a9a9a" stroke-width="0.8" />
</g>
<circle cx="546.8" cy="75.2" r="3.6" fill="#f4f4f4" stroke="#2fb24a" stroke-width="1.7" />
<path d="M545 70.6 l3.6 0.8 l-2.6 2.8z M548.6 79.8 l-3.6 -0.8 l2.6 -2.8z" stroke="none" fill="#2fb24a" stroke-width="1" />
<rect x="542.4" y="74.6" width="1.8" height="1.2" fill="#f4f4f4" />
<rect x="549.4" y="74.6" width="1.8" height="1.2" fill="#f4f4f4" />
<rect x="557.4" y="70.8" width="13.4" height="15.4" fill="#f4f4f4" stroke="#707070" stroke-width="0.9"/>
<rect x="559" y="72" width="5.4" height="3" fill="#5b5b5b" />
<path d="M565.6 72.4 h7 v-2.4 l5.8 4.4 l-5.8 4.4 v-2.4 h-7z" stroke="none" fill="#2f8fe6" stroke-width="1" />
<circle cx="560.8" cy="78.8" r="1.2" fill="#2f8fe6" stroke="none" stroke-width="1" />
<rect x="563.4" y="77.4" width="6.6" height="2.8" fill="#2f8fe6" />
<rect x="559" y="82" width="3.6" height="2.6" fill="#777" />
<rect x="563.6" y="83.6" width="14.6" height="8.4" fill="#dcecfb" stroke="#4da3e8" stroke-width="1" rx="0.8"/>
<circle cx="566.8" cy="87.8" r="1.3" fill="#2f8fe6" stroke="none" stroke-width="1" />
<rect x="569.4" y="86.4" width="6.4" height="2.8" fill="#2f8fe6" />
<rect x="594.4" y="70.2" width="1.7" height="14.4" fill="#9a6a3c" />
<path d="M595.2 83.6 l-6.4 8.6 h12.8z" stroke="none" fill="#f5a30a" stroke-width="1" />
<rect x="593.2" y="83.4" width="4" height="1.4" fill="#c98a2c" />
<rect x="611.8" y="67.6" width="86.80000000000007" height="26.9" fill="#f4f4f4" stroke="#cfcfcf" stroke-width="0.9"/>
<rect x="613.8" y="70.6" width="1.6" height="1.2" fill="#b4b4b4" />
<rect x="613.8" y="72.89999999999999" width="1.6" height="1.2" fill="#b4b4b4" />
<rect x="613.8" y="75.19999999999999" width="1.6" height="1.2" fill="#b4b4b4" />
<rect x="613.8" y="77.5" width="1.6" height="1.2" fill="#b4b4b4" />
<path d="M620 74.6 h9.200000000000001 l0.6 0.8 l0.6 -0.8 h9.200000000000001 v13.6 h-9.200000000000001 l-0.6 0.8 l-0.6 -0.8 h-9.200000000000001z" stroke="#666" fill="#f6f6f6" stroke-width="1" />
<line x1="629.8" y1="75.39999999999999" x2="629.8" y2="88.79999999999998" stroke="#666" stroke-width="0.9" />
<line x1="621.8" y1="77.19999999999999" x2="628.0" y2="77.19999999999999" stroke="#b9b9b9" stroke-width="0.8" />
<line x1="631.5999999999999" y1="77.19999999999999" x2="637.8000000000001" y2="77.19999999999999" stroke="#b9b9b9" stroke-width="0.8" />
<line x1="621.8" y1="79.19999999999999" x2="628.0" y2="79.19999999999999" stroke="#b9b9b9" stroke-width="0.8" />
<line x1="631.5999999999999" y1="79.19999999999999" x2="637.8000000000001" y2="79.19999999999999" stroke="#b9b9b9" stroke-width="0.8" />
<line x1="621.8" y1="81.19999999999999" x2="628.0" y2="81.19999999999999" stroke="#b9b9b9" stroke-width="0.8" />
<line x1="631.5999999999999" y1="81.19999999999999" x2="637.8000000000001" y2="81.19999999999999" stroke="#b9b9b9" stroke-width="0.8" />
<line x1="621.8" y1="83.19999999999999" x2="628.0" y2="83.19999999999999" stroke="#b9b9b9" stroke-width="0.8" />
<line x1="631.5999999999999" y1="83.19999999999999" x2="637.8000000000001" y2="83.19999999999999" stroke="#b9b9b9" stroke-width="0.8" />
<line x1="621.8" y1="85.19999999999999" x2="628.0" y2="85.19999999999999" stroke="#b9b9b9" stroke-width="0.8" />
<line x1="631.5999999999999" y1="85.19999999999999" x2="637.8000000000001" y2="85.19999999999999" stroke="#b9b9b9" stroke-width="0.8" />
<rect x="630.6" y="75.6" width="8" height="11.6" fill="#f6f6f6" />
<g transform="translate(630.8 81) rotate(-41)">
<path d="M0 0 l2.6 -2.15 v4.3z" stroke="none" fill="#5a5a5a" stroke-width="1" />
<rect x="2.6" y="-2.15" width="9.4" height="4.3" fill="#f3b23c" />
<rect x="12.0" y="-2.15" width="1.0" height="4.3" fill="#f4f4f4" />
<path d="M13.0 -2.15 h1 a2.15 2.15 0 0 1 0 4.3 h-1z" stroke="none" fill="#ee1c2e" stroke-width="1" />
</g>
<path d="M647.4 76.8 h9.5 l0.6 0.8 l0.6 -0.8 h9.5 v14.4 h-9.5 l-0.6 0.8 l-0.6 -0.8 h-9.5z" stroke="#7a7a7a" fill="#f6f6f6" stroke-width="1" />
<line x1="657.5" y1="77.6" x2="657.5" y2="91.8" stroke="#7a7a7a" stroke-width="0.9" />
<line x1="649.1999999999999" y1="79.39999999999999" x2="655.7" y2="79.39999999999999" stroke="#b9b9b9" stroke-width="0.8" />
<line x1="659.3" y1="79.39999999999999" x2="665.8000000000001" y2="79.39999999999999" stroke="#b9b9b9" stroke-width="0.8" />
<line x1="649.1999999999999" y1="81.39999999999999" x2="655.7" y2="81.39999999999999" stroke="#b9b9b9" stroke-width="0.8" />
<line x1="659.3" y1="81.39999999999999" x2="665.8000000000001" y2="81.39999999999999" stroke="#b9b9b9" stroke-width="0.8" />
<line x1="649.1999999999999" y1="83.39999999999999" x2="655.7" y2="83.39999999999999" stroke="#b9b9b9" stroke-width="0.8" />
<line x1="659.3" y1="83.39999999999999" x2="665.8000000000001" y2="83.39999999999999" stroke="#b9b9b9" stroke-width="0.8" />
<line x1="649.1999999999999" y1="85.39999999999999" x2="655.7" y2="85.39999999999999" stroke="#b9b9b9" stroke-width="0.8" />
<line x1="659.3" y1="85.39999999999999" x2="665.8000000000001" y2="85.39999999999999" stroke="#b9b9b9" stroke-width="0.8" />
<line x1="649.1999999999999" y1="87.39999999999999" x2="655.7" y2="87.39999999999999" stroke="#b9b9b9" stroke-width="0.8" />
<line x1="659.3" y1="87.39999999999999" x2="665.8000000000001" y2="87.39999999999999" stroke="#b9b9b9" stroke-width="0.8" />
<path d="M658.2 74.6 l1.6 -1.6 l2.2 2.2 l4 -4 l1.6 1.6 l-5.6 5.6z" stroke="none" fill="#21a038" stroke-width="1" />
<path d="M674.6 86.19999999999999 l7.0 -6.8 h11.6 l-7.0 6.8z" stroke="#6e6e6e" fill="#f4f4f4" stroke-width="0.9" />
<path d="M674.6 81.8 l7.0 -6.8 h11.6 l-7.0 6.8z" stroke="#6e6e6e" fill="#f4f4f4" stroke-width="0.9" />
<path d="M674.6 77.39999999999999 l7.0 -6.8 h11.6 l-7.0 6.8z" stroke="#6e6e6e" fill="#f6f6f6" stroke-width="0.9" />
<rect x="686.4" y="81.4" width="9.8" height="11.2" fill="#e06468" rx="1"/>
<rect x="686.4" y="90" width="9.8" height="1.2" fill="#f2b0b0" />
<rect x="-10" y="98" width="42" height="530" fill="#f6f6f6" />
<rect x="1.4" y="98.5" width="27.2" height="540" fill="#f3f3f3" stroke="#c9c9c9" stroke-width="0.9"/>
<rect x="3.4" y="100.6" width="1.4" height="1.1" fill="#b0b0b0" />
<rect x="5.8" y="100.6" width="1.4" height="1.1" fill="#b0b0b0" />
<rect x="8.2" y="100.6" width="1.4" height="1.1" fill="#b0b0b0" />
<rect x="10.6" y="100.6" width="1.4" height="1.1" fill="#b0b0b0" />
<line x1="4.6" y1="127.2" x2="24.3" y2="107.4" stroke="#707070" stroke-width="1" />
<rect x="3.15" y="126.05" width="2.5" height="2.5" rx="0.95" fill="#1e90ff"/>
<rect x="23.15" y="106.05" width="2.5" height="2.5" rx="0.95" fill="#1e90ff"/>
<line x1="5.4" y1="151.2" x2="23" y2="134.2" stroke="#707070" stroke-width="1" />
<path d="M24.8 132.4 l-1 4.6 l-3.6 -3.6z" stroke="none" fill="#5c5c5c" stroke-width="1" />
<path d="M3.4 153 l1 -4.6 l3.6 3.6z" stroke="none" fill="#5c5c5c" stroke-width="1" />
<rect x="12.75" y="141.85" width="2.5" height="2.5" rx="0.95" fill="#1e90ff"/>
<path d="M4.4 175 h13.8" stroke="#8a8a8a" fill="none" stroke-width="1.2" />
<path d="M18.2 175 h2.4 a5.2 5.2 0 0 0 0 -10.4 h-2.4" stroke="#707070" fill="none" stroke-width="1" />
<rect x="3.15" y="173.75" width="2.5" height="2.5" rx="0.95" fill="#1e90ff"/>
<rect x="16.95" y="173.75" width="2.5" height="2.5" rx="0.95" fill="#1e90ff"/>
<rect x="16.95" y="163.35" width="2.5" height="2.5" rx="0.95" fill="#1e90ff"/>
<path d="M14.7 185.4 l10.6 8 l-3.8 12.1 h-13.5 l-3.8 -12.1z" stroke="#707070" fill="none" stroke-width="1" />
<rect x="13.55" y="195.05" width="2.5" height="2.5" rx="0.95" fill="#1e90ff"/>
<rect x="20.45" y="204.05" width="2.5" height="2.5" rx="0.95" fill="#1e90ff"/>
<path d="M4.4 215 h20 v14.4 h-20z" stroke="#707070" fill="none" stroke-width="1" />
<path d="M4.4 215 h20" stroke="#8f8f8f" fill="none" stroke-width="1.3" />
<rect x="3.15" y="213.65" width="2.5" height="2.5" rx="0.95" fill="#1e90ff"/>
<rect x="23.15" y="228.15" width="2.5" height="2.5" rx="0.95" fill="#1e90ff"/>
<path d="M5.9 257.8 c1.4 -10.4 8 -17.6 18.5 -18.8" stroke="#707070" fill="none" stroke-width="1" />
<rect x="4.65" y="256.55" width="2.5" height="2.5" rx="0.95" fill="#1e90ff"/>
<rect x="10.05" y="243.25" width="2.5" height="2.5" rx="0.95" fill="#1e90ff"/>
<rect x="23.15" y="237.75" width="2.5" height="2.5" rx="0.95" fill="#1e90ff"/>
<circle cx="14" cy="274" r="10.7" fill="none" stroke="#707070" stroke-width="1" />
<line x1="14" y1="274" x2="18.6" y2="269.4" stroke="#1e90ff" stroke-width="1" />
<path d="M20.8 267.2 l-1 3.8 l-2.8 -2.8z" stroke="none" fill="#1e90ff" stroke-width="1" />
<rect x="12.75" y="272.95" width="2.5" height="2.5" rx="0.95" fill="#1e90ff"/>
<path d="M12.83 294.00 A3.78 3.78 0 0 1 19.30 294.82 A3.22 3.22 0 0 1 23.52 298.44 A2.74 2.74 0 0 1 23.52 303.16 A3.22 3.22 0 0 1 19.30 306.78 A3.78 3.78 0 0 1 12.83 307.60 A3.57 3.57 0 0 1 7.15 305.24 A2.88 2.88 0 0 1 4.90 300.80 A2.88 2.88 0 0 1 7.15 296.36 A3.57 3.57 0 0 1 12.83 294.00 Z" stroke="#808080" fill="none" stroke-width="0.9" />
<path d="M4.4 336.8 c0 -8 1.6 -13.6 4.4 -13.6 c3.6 0 7.6 7.8 11.4 7.6 c3.2 -0.2 4.2 -5.6 4.2 -13.8" stroke="#707070" fill="none" stroke-width="1" />
<rect x="23.15" y="315.75" width="2.5" height="2.5" rx="0.95" fill="#1e90ff"/>
<rect x="7.35" y="322.15" width="2.5" height="2.5" rx="0.95" fill="#1e90ff"/>
<rect x="18.95" y="329.55" width="2.5" height="2.5" rx="0.95" fill="#1e90ff"/>
<rect x="3.15" y="335.55" width="2.5" height="2.5" rx="0.95" fill="#1e90ff"/>
<ellipse cx="14.2" cy="353.2" rx="9.9" ry="7" fill="none" stroke="#707070" stroke-width="1"/>
<rect x="12.95" y="345.35" width="2.5" height="2.5" rx="0.95" fill="#1e90ff"/>
<rect x="3.15" y="352.35" width="2.5" height="2.5" rx="0.95" fill="#1e90ff"/>
<rect x="22.65" y="352.35" width="2.5" height="2.5" rx="0.95" fill="#1e90ff"/>
<path d="M24.4 378 c-1.6 -4.4 -5.4 -6.6 -10.6 -6.6 c-6 0 -10.4 3.4 -10.4 8 c0 4 4.2 7 10.8 7.4" stroke="#707070" fill="none" stroke-width="1" />
<rect x="12.95" y="377.75" width="2.5" height="2.5" rx="0.95" fill="#1e90ff"/>
<rect x="23.15" y="377.75" width="2.5" height="2.5" rx="0.95" fill="#1e90ff"/>
<rect x="12.95" y="385.55" width="2.5" height="2.5" rx="0.95" fill="#1e90ff"/>
<path d="M14 395 h8.4 l3.2 3.2 v12.6 h-11.6z" stroke="none" fill="#5aa7e8" stroke-width="1" />
<path d="M22.4 395 v3.2 h3.2z" stroke="none" fill="#a8d0f4" stroke-width="1" />
<rect x="4.4" y="401.6" width="14.4" height="9.8" fill="#f1f1f1" stroke="#767676" stroke-width="1"/>
<circle cx="18.2" cy="411.6" r="4.8" fill="none" stroke="#7a7a7a" stroke-width="0.9" />
<rect x="3.6" y="410.6" width="1.6" height="1.6" fill="#666" />
<path d="M23 416.4 h2.4 v-2.4z" stroke="none" fill="#333" stroke-width="1" />
<rect x="4.4" y="428.6" width="12.6" height="9.8" fill="#f1f1f1" stroke="#767676" stroke-width="1"/>
<circle cx="17" cy="437.8" r="4.4" fill="none" stroke="#7a7a7a" stroke-width="0.9" />
<rect x="3.6" y="437.6" width="1.6" height="1.6" fill="#666" />
<polygon points="19.60,421.00 20.59,424.20 23.56,422.64 22.00,425.61 25.20,426.60 22.00,427.59 23.56,430.56 20.59,429.00 19.60,432.20 18.61,429.00 15.64,430.56 17.20,427.59 14.00,426.60 17.20,425.61 15.64,422.64 18.61,424.20" fill="#f7a10a"/>
<rect x="13" y="450" width="2" height="2" fill="#555" />
<rect x="6.2" y="456.8" width="2" height="2" fill="#555" />
<rect x="20" y="456.8" width="2" height="2" fill="#555" />
<rect x="13" y="463.8" width="2" height="2" fill="#555" />
<clipPath id="hl"><rect x="7" y="477" width="15" height="14.6"/></clipPath>
<g clip-path="url(#hl)">
<rect x="7" y="477" width="15" height="14.6" fill="#fafdff" />
<line x1="-10.5" y1="492" x2="4.5" y2="477" stroke="#4aa2f0" stroke-width="1.0" />
<line x1="-7.0" y1="492" x2="8.0" y2="477" stroke="#4aa2f0" stroke-width="1.0" />
<line x1="-3.5" y1="492" x2="11.5" y2="477" stroke="#4aa2f0" stroke-width="1.0" />
<line x1="0.0" y1="492" x2="15.0" y2="477" stroke="#4aa2f0" stroke-width="1.0" />
<line x1="3.5" y1="492" x2="18.5" y2="477" stroke="#4aa2f0" stroke-width="1.0" />
<line x1="7.0" y1="492" x2="22.0" y2="477" stroke="#4aa2f0" stroke-width="1.0" />
<line x1="10.5" y1="492" x2="25.5" y2="477" stroke="#4aa2f0" stroke-width="1.0" />
<line x1="14.0" y1="492" x2="29.0" y2="477" stroke="#4aa2f0" stroke-width="1.0" />
<line x1="17.5" y1="492" x2="32.5" y2="477" stroke="#4aa2f0" stroke-width="1.0" />
<line x1="21.0" y1="492" x2="36.0" y2="477" stroke="#4aa2f0" stroke-width="1.0" />
<line x1="24.5" y1="492" x2="39.5" y2="477" stroke="#4aa2f0" stroke-width="1.0" />
</g>
<path d="M3.4 476.4 h22 M3.4 492.4 h22 M6.6 473.2 v22.4 M22.6 473.2 v22.4" stroke="#6a6a6a" fill="none" stroke-width="1" />
<linearGradient id="gr" x1="0" y1="0" x2="0" y2="1"><stop offset="0" stop-color="#1c8ae8"/><stop offset="1" stop-color="#f2f7fc"/></linearGradient>
<rect x="7.6" y="503.6" width="14" height="13.8" fill="url(#gr)" />
<path d="M3.4 502.4 h22 M3.4 518.4 h22 M6.6 499.2 v22.4 M22.6 499.2 v22.4" stroke="#6a6a6a" fill="none" stroke-width="1" />
<path d="M3.6 528.6 h13.4 l8.4 8.4 v8.2 h-21.8z" stroke="#888" fill="#f0f0f0" stroke-width="1" />
<circle cx="13.6" cy="536.8" r="3.9" fill="none" stroke="#808080" stroke-width="1" />
<rect x="3.6" y="553.4" width="21" height="17.8" fill="#f6f6f6" stroke="#7a7a7a" stroke-width="1"/>
<path d="M3.6 559.4 h21 M3.6 563.4 h21 M3.6 567.4 h21 M10.6 559.4 v11.8 M17.6 559.4 v11.8" stroke="#808080" fill="none" stroke-width="0.9" />
<text x="14.4" y="598.8" font-size="27.5" fill="#5e5e5e"  text-anchor="middle" stroke="#5e5e5e" stroke-width="0.5">A</text>
<circle cx="8.6" cy="609.4" r="5.3" fill="#22b14c" stroke="none" stroke-width="1" />
<path d="M15 606.6 h5.2 v4.6" stroke="#555" fill="none" stroke-width="0.9" />
<path d="M17.8 610 h4.8 l-2.4 3.6z" stroke="none" fill="#333" stroke-width="1" />
<clipPath id="lc"><rect x="0" y="98" width="32" height="528.2"/></clipPath>
<circle cx="20.4" cy="620.8" r="5.3" fill="#5aa7e8" stroke="none" stroke-width="1" clip-path="url(#lc)"/>
<rect x="728.5" y="98.5" width="28" height="477" fill="#f3f3f3" stroke="#c9c9c9" stroke-width="0.9"/>
<rect x="731.2" y="100.6" width="1.4" height="1.1" fill="#b0b0b0" />
<rect x="733.6" y="100.6" width="1.4" height="1.1" fill="#b0b0b0" />
<rect x="736.0" y="100.6" width="1.4" height="1.1" fill="#b0b0b0" />
<rect x="738.4000000000001" y="100.6" width="1.4" height="1.1" fill="#b0b0b0" />
<path d="M752.8 106.2 v7.6 l-10.4 9.6 l-4.6 -4.6z" stroke="none" fill="#f5bb4a" stroke-width="1" />
<path d="M737.8 118.8 l4.6 4.6 l-1.6 1.5 l-4.6 -4.6z" stroke="none" fill="#ffffff" stroke-width="1" />
<path d="M736.2 120.3 l4.6 4.6 c-2 2 -4.6 2 -5.6 0.8 c-1.2 -1.2 -1 -3.6 1 -5.4z" stroke="none" fill="#ee2430" stroke-width="1" />
<rect x="731.2" y="127" width="3.8" height="1.8" fill="#b5b5b5" />
<rect x="742.2" y="127" width="10.8" height="1.8" fill="#9dcbf2" />
<circle cx="736" cy="137.8" r="4.7" fill="none" stroke="#5c5c5c" stroke-width="1" />
<path d="M742.4 134.6 h5.6 v4.8" stroke="#555" fill="none" stroke-width="0.9" />
<path d="M745.6 138.6 h4.8 l-2.4 3.4z" stroke="none" fill="#333" stroke-width="1" />
<circle cx="741" cy="149.4" r="4.9" fill="none" stroke="#3b9cf0" stroke-width="1.1" />
<circle cx="748.2" cy="149.4" r="4.9" fill="none" stroke="#3b9cf0" stroke-width="1.1" />
<path d="M741.6 160.4 v19 h-10z" stroke="#6a6a6a" fill="none" stroke-width="1" />
<path d="M742.6 160.4 v19 h9.6z" stroke="#3b9cf0" fill="none" stroke-width="1" />
<rect x="740.8" y="161" width="1.6" height="18" fill="#c0c0c0" />
<path d="M753 188.6 h-13.6 a8 8 0 0 0 0 16 h13.6" stroke="#3b9cf0" fill="none" stroke-width="1.3" />
<path d="M753 191.9 h-13.4 a4.5 4.5 0 0 0 0 9 h13.4" stroke="#707070" fill="none" stroke-width="1" />
<rect x="732.6" y="213" width="8" height="7.4" fill="none" stroke="#7a7a7a" stroke-width="1"/>
<rect x="743.6" y="213" width="8" height="7.4" fill="none" stroke="#3b9cf0" stroke-width="1"/>
<rect x="732.6" y="224" width="8" height="7.4" fill="none" stroke="#3b9cf0" stroke-width="1"/>
<rect x="743.6" y="224" width="8" height="7.4" fill="none" stroke="#3b9cf0" stroke-width="1"/>
<path d="M751 232.8 h2.4 v-2.4z" stroke="none" fill="#222" stroke-width="1" />
<path d="M734 248.6 h16 M742 240.6 v16" stroke="#3e3e3e" fill="none" stroke-width="1.6" />
<path d="M742 237.6 l3.4 4.2 h-6.8z M742 259.6 l3.4 -4.2 h-6.8z M731 248.6 l4.2 -3.4 v6.8z M753 248.6 l-4.2 -3.4 v6.8z" stroke="none" fill="#3e3e3e" stroke-width="1" />
<path d="M751.8 274.4 a9.8 9.8 0 1 1 -9.6 -8" stroke="#5e5e5e" fill="none" stroke-width="1" />
<path d="M742 263.8 l4 2.4 l-4 2.6z" stroke="none" fill="#333" stroke-width="1" />
<rect x="731.4" y="290.4" width="21" height="21.2" fill="none" stroke="#3b9cf0" stroke-width="1"/>
<rect x="731.4" y="299.6" width="12" height="12" fill="#f3f3f3" stroke="#707070" stroke-width="1"/>
<rect x="742.4" y="300" width="1.6" height="11.6" fill="#bdbdbd" />
<path d="M741.6 316.4 h4.6 l6.4 21 h-11" stroke="#3b9cf0" fill="none" stroke-width="1" />
<rect x="731.4" y="316.4" width="10.2" height="21" fill="none" stroke="#666" stroke-width="1"/>
<rect x="740.6" y="316.8" width="1.6" height="20.6" fill="#bdbdbd" />
<path d="M737.2 332.8 h6" stroke="#555" fill="none" stroke-width="1" />
<path d="M743 330.6 l3.6 2.2 l-3.6 2.2z" stroke="none" fill="#333" stroke-width="1" />
<path d="M731.2 344 h3 M735.4 344 h3 M739.6 344 h2.6" stroke="#6bb2f2" fill="none" stroke-width="1.8" />
<rect x="747.6" y="343.2" width="5.4" height="1.7" fill="#b9b9b9" />
<path d="M744.2 342.8 l1.6 1.6 l0.2 11.2 l-1.6 2.2 l-7.8 -10.6 l1.2 -0.6 l6.4 5z" stroke="none" fill="#3a3a3a" stroke-width="1" />
<ellipse cx="743.6" cy="360.4" rx="2.2" ry="3" fill="none" stroke="#3a3a3a" stroke-width="1.3" transform="rotate(20 743.6 360.4)"/>
<ellipse cx="748.6" cy="357.6" rx="2.2" ry="3" fill="none" stroke="#3a3a3a" stroke-width="1.3" transform="rotate(-60 748.6 357.6)"/>
<rect x="751.2" y="371.2" width="1.7" height="16.6" fill="#b5b5b5" />
<path d="M737.2 377.8 h10" stroke="#555" fill="none" stroke-width="1" />
<path d="M747 375.4 l4 2.4 l-4 2.4z" stroke="none" fill="#333" stroke-width="1" />
<path d="M731.2 382.6 h5.4" stroke="#8a8a8a" fill="none" stroke-width="1" />
<path d="M738 382.6 h2.6 M742 382.6 h2.6 M746 382.6 h2.6 M749.6 382.6 h1.4" stroke="#3b9cf0" fill="none" stroke-width="1" />
<rect x="731.8" y="399.4" width="20.6" height="13.6" rx="1" fill="none" stroke="#9a9a9a" stroke-width="1.2"/>
<rect x="746.8" y="397" width="1.2" height="4.6" fill="#3b9cf0" />
<rect x="731.8" y="426" width="20.6" height="13.6" rx="1" fill="none" stroke="#9a9a9a" stroke-width="1.2"/>
<rect x="738.4" y="424.6" width="8.2" height="3" fill="#f3f3f3" />
<rect x="738" y="423.6" width="1.2" height="4.8" fill="#3b9cf0" />
<rect x="745.2" y="423.6" width="1.2" height="4.8" fill="#3b9cf0" />
<path d="M731.2 457.6 h21.6" stroke="#8a8a8a" fill="none" stroke-width="1" />
<path d="M738 455 l4 2.6 l-4 2.6z M746.2 455 l-4 2.6 l4 2.6z" stroke="none" fill="#1e88ea" stroke-width="1" />
<path d="M744.2 473.6 h8.6" stroke="#777" fill="none" stroke-width="1" />
<path d="M731.6 486.6 v8.6" stroke="#555" fill="none" stroke-width="1" />
<path d="M731.6 486 l12.4 -12.2" stroke="#3b9cf0" fill="none" stroke-width="1.1" />
<path d="M745 500 h8" stroke="#b0b0b0" fill="none" stroke-width="1.8" />
<path d="M731.6 513.6 v8" stroke="#555" fill="none" stroke-width="1" />
<path d="M731.6 513.2 c0 -8 5.4 -13 13 -13.2" stroke="#3b9cf0" fill="none" stroke-width="1.1" />
<path d="M731.6 547.4 c0 -5 0.4 -8.6 1.2 -10.6" stroke="#777" fill="none" stroke-width="1" />
<path d="M752.8 526 c0 5 -0.2 8.6 -1 11" stroke="#777" fill="none" stroke-width="1" />
<path d="M732.8 536.8 c1.2 -4 3.6 -4.8 5.8 -3.2 c3.6 2.4 5.6 8 9.2 8.4 c2 0.2 3.4 -1.6 4 -5" stroke="#3b9cf0" fill="none" stroke-width="1.1" />
<path d="M733.6 557.6 l4.4 -4.6 h12 l-4.4 4.6z" stroke="#3b9cf0" fill="none" stroke-width="1" />
<path d="M747.2 560.6 l5.2 -5.4 v11.4 l-5.2 5.4z" stroke="#3b9cf0" fill="none" stroke-width="1" />
<rect x="731.2" y="560" width="1" height="12.6" fill="#3b9cf0" />
<rect x="733.6" y="559.8" width="11.8" height="12.6" fill="#f3f3f3" stroke="#777" stroke-width="1.2"/>
<rect x="32" y="616" width="694" height="11" fill="#f1f1f1" />
<rect x="43.8" y="616.6" width="11" height="9.6" fill="#cdcdcd" />
<path d="M38.6 618.6 l-2.6 2.7 l2.6 2.7" stroke="#4a4a4a" fill="none" stroke-width="1.4" />
<path d="M706.6 618.2 l2.6 2.7 l-2.6 2.7" stroke="#4a4a4a" fill="none" stroke-width="1.4" />
<rect x="186" y="608.8" width="385.6" height="6.7" fill="#b4b4b4" fill-opacity="0.94"/>
<rect x="186" y="615.5" width="385.6" height="11.6" fill="#f9f9f9" />
<rect x="186" y="608.8" width="37.4" height="18.3" fill="#d0d0d0" />
<rect x="480.9" y="608.8" width="1.2" height="6.7" fill="#d9d9d9" />
<rect x="188.2" y="611.2" width="1.2" height="1.2" fill="#8a8a8a" />
<rect x="190.4" y="611.2" width="1.2" height="1.2" fill="#8a8a8a" />
<rect x="188.2" y="613.6" width="1.2" height="1.2" fill="#8a8a8a" />
<rect x="190.4" y="613.6" width="1.2" height="1.2" fill="#8a8a8a" />
<rect x="188.2" y="616.0" width="1.2" height="1.2" fill="#8a8a8a" />
<rect x="190.4" y="616.0" width="1.2" height="1.2" fill="#8a8a8a" />
<rect x="188.2" y="618.4000000000001" width="1.2" height="1.2" fill="#8a8a8a" />
<rect x="190.4" y="618.4000000000001" width="1.2" height="1.2" fill="#8a8a8a" />
<rect x="188.2" y="620.8000000000001" width="1.2" height="1.2" fill="#8a8a8a" />
<rect x="190.4" y="620.8000000000001" width="1.2" height="1.2" fill="#8a8a8a" />
<rect x="188.2" y="623.2" width="1.2" height="1.2" fill="#8a8a8a" />
<rect x="190.4" y="623.2" width="1.2" height="1.2" fill="#8a8a8a" />
<path d="M195 614.4 l5 5.2 M200 614.4 l-5 5.2" stroke="#7a7a7a" fill="none" stroke-width="1.2" />
<path d="M209.6 622.4 l5.4 -5.6" stroke="#8a8a8a" fill="none" stroke-width="1.8" />
<path d="M214 618.2 a3 3 0 1 0 2.4 -4.6 l1.6 1.8 l-1.8 1.8 l-1.8 -1.6 a3 3 0 0 0 -0.4 2.6z" stroke="#8a8a8a" fill="#f2f2f2" stroke-width="0.8" />
<rect x="227" y="614" width="9.4" height="7.2" fill="#f9f9f9" stroke="#666" stroke-width="0.9"/>
<path d="M228.8 616 l1.6 1.4 l-1.6 1.4" stroke="#666" fill="none" stroke-width="0.7" />
<rect x="231.4" y="619" width="2.6" height="0.7" fill="#666" />
<path d="M238.4 616.6 h4.2 l-2.1 2.4z" stroke="none" fill="#555" stroke-width="1" />
<rect x="336.6" y="612.4" width="79.2" height="11" fill="#c9c9c9" rx="1.5"/>
<text x="245.4" y="621.6" font-size="9.2" fill="#4a4a4a" class="m" letter-spacing="-0.67">Specify an option [<tspan fill="#2a2ad8">A</tspan>dvanced options] &lt;Internal point&gt;:</text>
<path d="M563.6 618.8 l2.4 -2.6 l2.4 2.6z" stroke="none" fill="#777" stroke-width="1" />
<rect x="-10" y="627" width="780" height="19.2" fill="#dadada" />
<rect x="-10" y="626.8" width="780" height="0.9" fill="#d2d2d2" />
<rect x="-10" y="627.6" width="11.6" height="19" fill="#ececec" />
<rect x="-10" y="646.2" width="780" height="13.8" fill="#f0f0f0" />
<rect x="-10" y="646.6" width="780" height="0.8" fill="#dcdcdc" />
<path d="M9.6 627 c3 2.5 3 12.4 7 12.4 h17 c4 0 4 -9.9 7 -12.4z" stroke="none" fill="#f3f3f3" stroke-width="1" />
<path d="M43.4 627 c3 2.5 3 12.4 7 12.4 h21 c4 0 4 -9.9 7 -12.4z" stroke="none" fill="#e6e6e6" stroke-width="1" />
<path d="M79 627 c3 2.5 3 12.4 7 12.4 h21 c4 0 4 -9.9 7 -12.4z" stroke="none" fill="#e6e6e6" stroke-width="1" />
<path d="M122.8 628 H133.2 Q134.8 628 134.3 629.4 L131.8 637 Q131.4 638.3 130 638.3 H119.8 Q118.4 638.3 118.9 637 L121.4 629.3 Q121.8 628 122.8 628Z" stroke="none" fill="#e8e8e8" stroke-width="1" />
<text x="16.8" y="636.8" font-size="8.3" fill="#2e2e2e"  font-weight="bold">模型</text>
<text x="49.4" y="636.8" font-size="8.4" fill="#666"  >布局1</text>
<text x="85" y="636.8" font-size="8.4" fill="#666"  >布局2</text>
<path d="M123.6 633.2 h5.6 M126.4 630.4 v5.6" stroke="#666" fill="none" stroke-width="1.2" />
<rect x="365.2" y="627.3" width="391.6" height="18.6" fill="#f2f2f2" stroke="#cfcfcf" stroke-width="0.8"/>
<text x="368.0" y="640.2" font-size="8.2" fill="#2e2e2e"  font-weight="bold">模型</text>
<rect x="387.4" y="629" width="15.0" height="15.4" fill="#c9e2f9" stroke="#5b9bd8" stroke-width="0.9"/>
<path d="M389.6 632.8 h10.6 M389.6 641 h10.6 M390.9 631.2 v11.2 M398.7 631.2 v11.2 M394.8 631.2 v11.2 M389.6 636.9 h10.6" stroke="#3a3a3a" fill="none" stroke-width="0.9" />
<rect x="408.2" y="632.8" width="1.2" height="1.2" fill="#555" />
<rect x="408.2" y="636.0" width="1.2" height="1.2" fill="#555" />
<rect x="408.2" y="639.1999999999999" width="1.2" height="1.2" fill="#555" />
<rect x="411.4" y="632.8" width="1.2" height="1.2" fill="#555" />
<rect x="411.4" y="636.0" width="1.2" height="1.2" fill="#555" />
<rect x="411.4" y="639.1999999999999" width="1.2" height="1.2" fill="#555" />
<rect x="414.59999999999997" y="632.8" width="1.2" height="1.2" fill="#555" />
<rect x="414.59999999999997" y="636.0" width="1.2" height="1.2" fill="#555" />
<rect x="414.59999999999997" y="639.1999999999999" width="1.2" height="1.2" fill="#555" />
<path d="M422.6 635.6 h4 l-2 2.4z" stroke="none" fill="#555" stroke-width="1" />
<rect x="431" y="629" width="0.9" height="15.6" fill="#d4d4d4" />
<path d="M435.6 631.4 v10.8 h10" stroke="#4f4f4f" fill="none" stroke-width="1.0" />
<path d="M435.6 638.2 h3.8 v4" stroke="#777" fill="none" stroke-width="0.7" />
<circle cx="455.6" cy="637.4" r="4.1" fill="none" stroke="#6a6a6a" stroke-width="1" />
<path d="M455.6 637.4 h6 M455.6 637.4 l4 -5" stroke="#6a6a6a" fill="none" stroke-width="0.9" />
<path d="M468.2 635.6 h4 l-2 2.4z" stroke="none" fill="#555" stroke-width="1" />
<path d="M483.3 631.2 v11.2" stroke="#2fae4a" fill="none" stroke-width="1.1" />
<path d="M479 631.8 l8.8 9.4" stroke="#e03030" fill="none" stroke-width="1.2" />
<circle cx="483.4" cy="636.6" r="1" fill="#777" stroke="none" stroke-width="1" />
<path d="M495.4 635.6 h4 l-2 2.4z" stroke="none" fill="#555" stroke-width="1" />
<rect x="504" y="629" width="15" height="15.4" fill="#c9e2f9" stroke="#5b9bd8" stroke-width="0.9"/>
<path d="M506.4 641.4 h10.6 M506.4 641.2 l10 -8.4" stroke="#4f4f4f" fill="none" stroke-width="1" />
<circle cx="511.4" cy="637" r="1" fill="#444" stroke="none" stroke-width="1" />
<rect x="525" y="633.4" width="8" height="7.8" fill="none" stroke="#6a6a6a" stroke-width="1"/>
<rect x="523.4" y="631.6" width="2.6" height="2.6" fill="#f2f2f2" stroke="#e07a20" stroke-width="0.8"/>
<path d="M539.2 635.6 h4 l-2 2.4z" stroke="none" fill="#555" stroke-width="1" />
<rect x="549.4" y="629" width="15.200000000000045" height="15.4" fill="#c9e2f9" stroke="#5b9bd8" stroke-width="0.9"/>
<g transform="translate(556.6 638.2) scale(1.0)">
<path d="M0 0.6 Q-2.9 -2.6 0 -6.6 Q2.9 -2.6 0 0.6Z" fill="#333" transform="rotate(0)"/>
<path d="M0 0.6 Q-2.9 -2.6 0 -6.6 Q2.9 -2.6 0 0.6Z" fill="#333" transform="rotate(128)"/>
<path d="M0 0.6 Q-2.9 -2.6 0 -6.6 Q2.9 -2.6 0 0.6Z" fill="#333" transform="rotate(-128)"/>
</g>
<circle cx="561" cy="633.6" r="1.5" fill="none" stroke="#333" stroke-width="0.8" />
<g transform="translate(573.6 638) scale(1.0)">
<path d="M0 0.6 Q-2.9 -2.6 0 -6.6 Q2.9 -2.6 0 0.6Z" fill="#4a4a4a" transform="rotate(0)"/>
<path d="M0 0.6 Q-2.9 -2.6 0 -6.6 Q2.9 -2.6 0 0.6Z" fill="#4a4a4a" transform="rotate(128)"/>
<path d="M0 0.6 Q-2.9 -2.6 0 -6.6 Q2.9 -2.6 0 0.6Z" fill="#4a4a4a" transform="rotate(-128)"/>
</g>
<path d="M576.4 631 l1 2.2 l2.2 0.4 l-1.8 1.2 l0.6 2.2" stroke="#4a4a4a" fill="none" stroke-width="0.8" />
<g transform="translate(590.6 638.4) scale(1.0)">
<path d="M0 0.6 Q-2.9 -2.6 0 -6.6 Q2.9 -2.6 0 0.6Z" fill="#4a4a4a" transform="rotate(0)"/>
<path d="M0 0.6 Q-2.9 -2.6 0 -6.6 Q2.9 -2.6 0 0.6Z" fill="#4a4a4a" transform="rotate(128)"/>
<path d="M0 0.6 Q-2.9 -2.6 0 -6.6 Q2.9 -2.6 0 0.6Z" fill="#4a4a4a" transform="rotate(-128)"/>
</g>
<text x="601.6" y="640.3" font-size="8.6" fill="#333"  textLength="9.6" lengthAdjust="spacingAndGlyphs">1:1</text>
<path d="M614.8 635.6 h4 l-2 2.4z" stroke="none" fill="#555" stroke-width="1" />
<rect x="622.4" y="629" width="0.9" height="15.6" fill="#d4d4d4" />
<polygon points="636.10,638.18 634.19,639.20 633.98,641.36 631.90,640.73 630.22,642.10 629.20,640.19 627.04,639.98 627.67,637.90 626.30,636.22 628.21,635.20 628.42,633.04 630.50,633.67 632.18,632.30 633.20,634.21 635.36,634.42 634.73,636.50" fill="#555"/>
<circle cx="631.2" cy="637.2" r="3.6" fill="#555" stroke="none" stroke-width="1" />
<circle cx="631.2" cy="637.2" r="1.6" fill="#f2f2f2" stroke="none" stroke-width="1" />
<path d="M643 635.6 h4 l-2 2.4z" stroke="none" fill="#555" stroke-width="1" />
<rect x="651" y="629" width="0.9" height="15.6" fill="#d4d4d4" />
<path d="M653.4 637.2 h10.8 M658.8 631.8 v10.8" stroke="#444" fill="none" stroke-width="1.3" />
<rect x="667.4" y="629" width="0.9" height="15.6" fill="#d4d4d4" />
<rect x="672.6" y="631.4" width="4.4" height="4.4" fill="none" stroke="#666" stroke-width="0.9"/>
<circle cx="681.6" cy="636.4" r="2.3" fill="none" stroke="#666" stroke-width="0.9" />
<path d="M674.6 642.6 l2.4 -4.2 l2.4 4.2z" stroke="#666" fill="none" stroke-width="0.8" />
<rect x="686" y="629" width="0.9" height="15.6" fill="#d4d4d4" />
<rect x="689.8" y="631.6" width="6" height="5.2" fill="#3a7bc8" />
<rect x="692.6" y="633.8" width="6.6" height="6.4" fill="#2f6fb8" />
<rect x="690" y="637.4" width="4" height="3.6" fill="#f0b030" />
<path d="M694.6 640 l1.8 1.8 l3.6 -3.8" stroke="#2bb24a" fill="none" stroke-width="1.5" />
<rect x="706" y="631.4" width="10" height="9" fill="#f6f6f6" stroke="#666" stroke-width="0.9"/>
<path d="M707 637 c1.6 -5 3 -5 4.4 -1 c1 3 2.6 3 4 -2" stroke="#4a90d6" fill="none" stroke-width="0.8" />
<path d="M714.2 636.4 l3.4 6 h-6.8z" stroke="none" fill="#f08030" stroke-width="1" />
<rect x="721.8" y="629" width="0.9" height="15.6" fill="#d4d4d4" />
<rect x="727.2" y="632.8" width="10.6" height="8" fill="#f6f6f6" stroke="#5a5a5a" stroke-width="0.9"/>
<path d="M733.4 634.4 h2.8 v2.6 M729 636.6 v2.6 h2.8" stroke="#555" fill="none" stroke-width="0.9" />
<path d="M736 634.6 l-2.6 2.4 M729.2 639 l2.6 -2.4" stroke="#555" fill="none" stroke-width="0.7" />
<rect x="743" y="632.1" width="11.6" height="1.3" fill="#555" />
<rect x="743" y="636.2" width="11.6" height="1.3" fill="#555" />
<rect x="743" y="640.4" width="11.6" height="1.3" fill="#555" />
</svg>
</body></html>
